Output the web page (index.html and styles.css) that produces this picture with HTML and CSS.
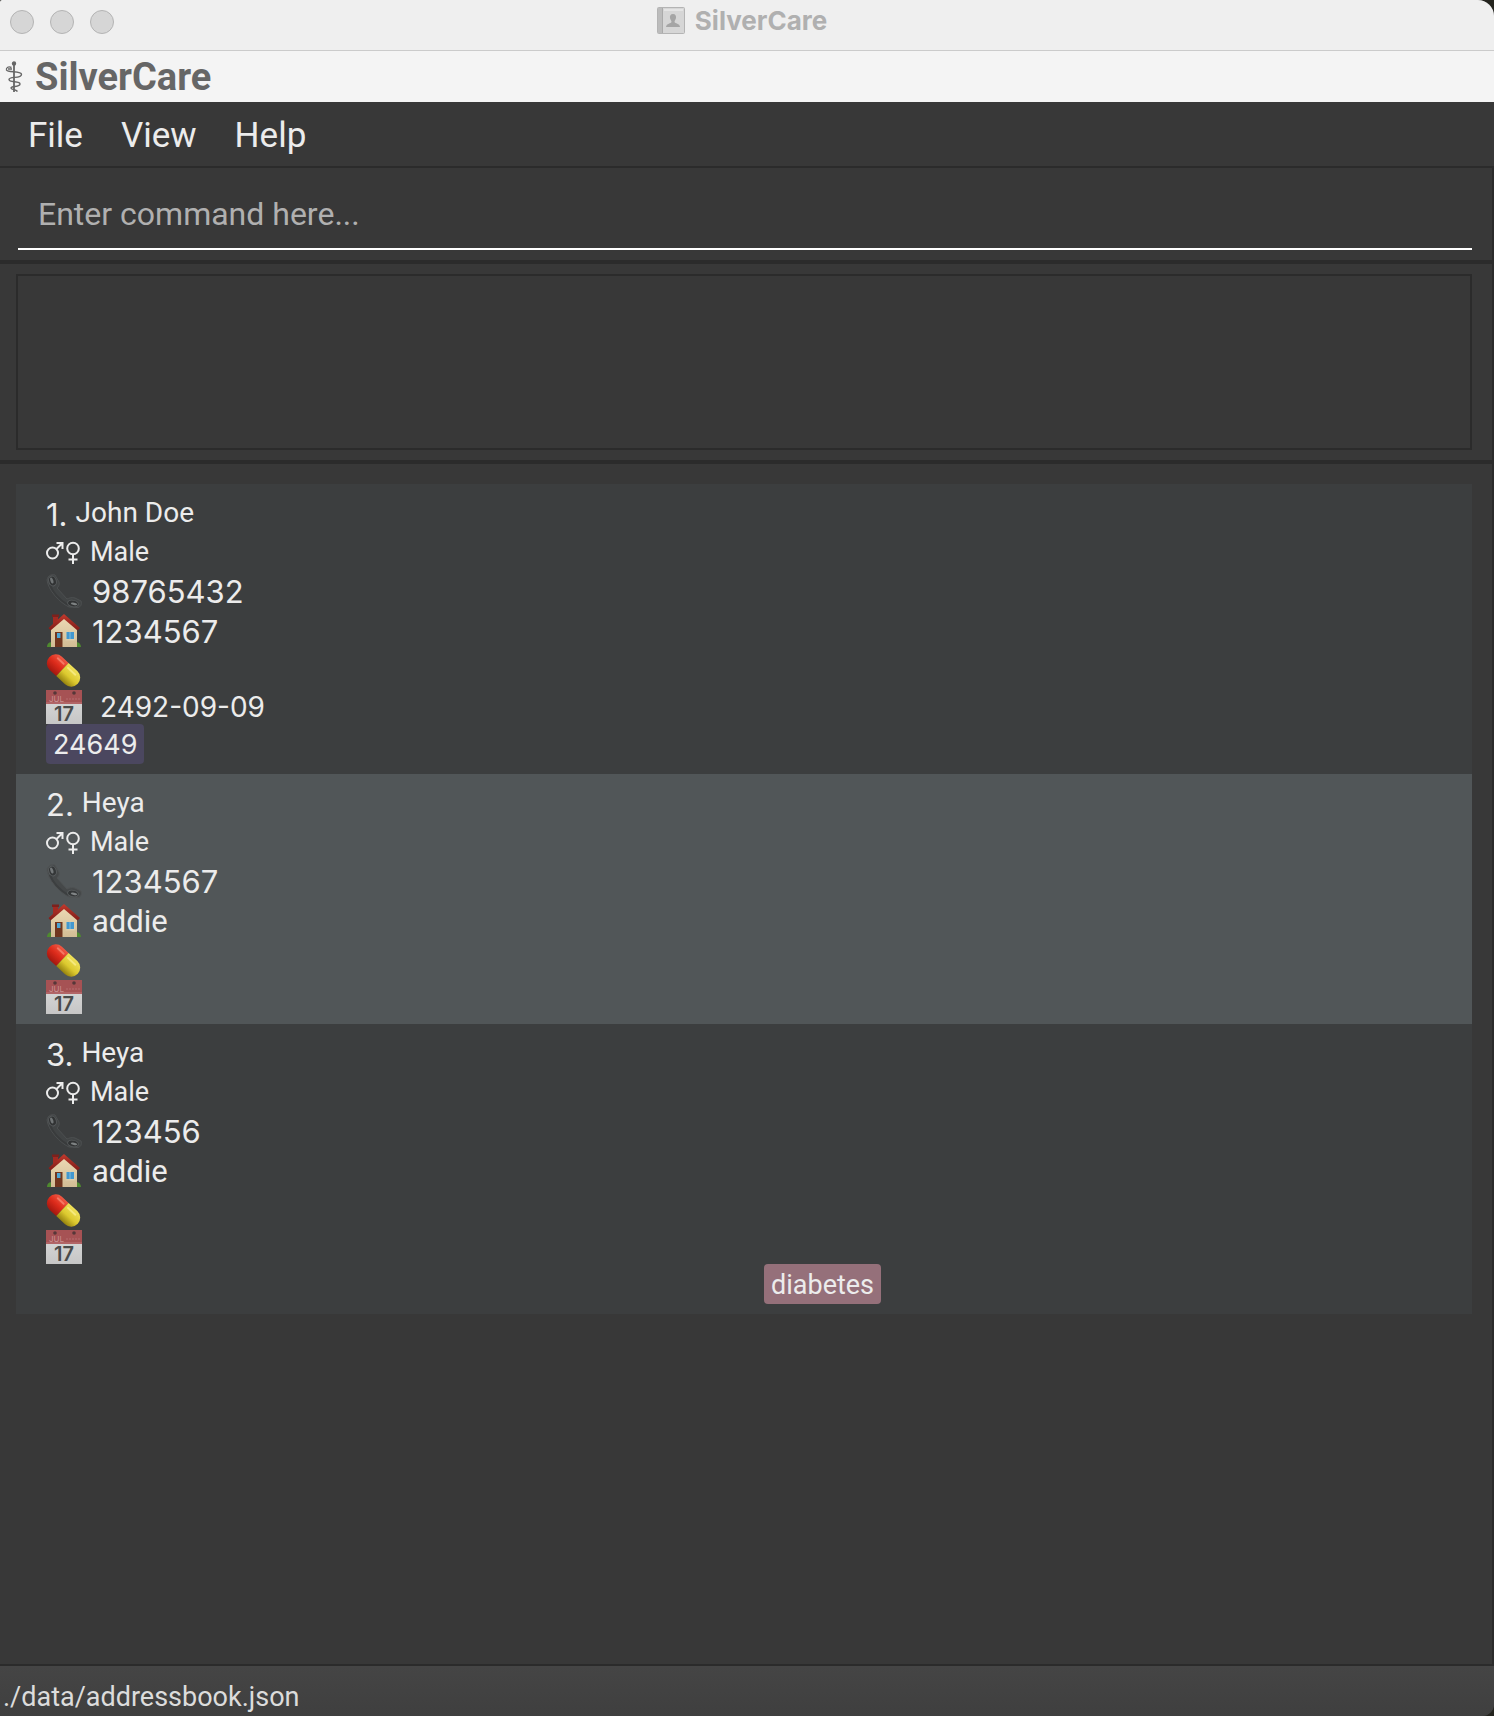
FILE: index.html
```html
<!DOCTYPE html>
<html lang="en">
<head>
<meta charset="utf-8">
<title>SilverCare</title>
<link rel="stylesheet" href="styles.css">
</head>
<body>
<svg class="sprite" aria-hidden="true">
  <defs>
    <linearGradient id="roof" x1="0" y1="0" x2="0" y2="1"><stop offset="0" stop-color="#c3392c"/><stop offset="1" stop-color="#7e1c18"/></linearGradient>
    <linearGradient id="wall" x1="0" y1="0" x2="0" y2="1"><stop offset="0" stop-color="#ecd9b4"/><stop offset="1" stop-color="#d3bd95"/></linearGradient>
    <linearGradient id="red" x1="0" y1="0" x2="0" y2="1"><stop offset="0" stop-color="#ef5a45"/><stop offset=".5" stop-color="#dd2b1b"/><stop offset="1" stop-color="#a3170f"/></linearGradient>
    <linearGradient id="yellow" x1="0" y1="0" x2="0" y2="1"><stop offset="0" stop-color="#f0e25a"/><stop offset=".55" stop-color="#dcc92e"/><stop offset="1" stop-color="#96830f"/></linearGradient>
    <linearGradient id="page" x1="0" y1="0" x2="0" y2="1"><stop offset="0" stop-color="#dcdcdc"/><stop offset="1" stop-color="#c6c6c6"/></linearGradient>
  </defs>
  <symbol id="gender" viewBox="0 0 36 26">
    <g fill="none" stroke="#ececec" stroke-width="2">
      <circle cx="6.500" cy="14" r="5.500"/><path d="M10.500 10 16 4.500M10.500 4H16.500V10"/>
      <circle cx="27" cy="9.500" r="5.800"/><path d="M27 15.500V25M22.500 20.500H31.500"/>
    </g>
  </symbol>
  <symbol id="phone" viewBox="0 0 36 34">
    <g opacity=".85">
    <path d="M1 6C2 1 6 0 9 1L13 8C14 11 12 13 11 14L21 25C23 24 26 23 29 24L35 27C36 30 35 33 32 33.500L23 33C14 29 2 16 1 6Z" fill="#434647" stroke="#505354" stroke-width="1"/>
    <path d="M4 11C7 19 14 26 22 31" fill="none" stroke="#393b3c" stroke-width="2"/>
    <ellipse cx="6.500" cy="7" rx="3.800" ry="5" fill="#303233" stroke="#5b5f60" transform="rotate(-18 6.500 7)"/>
    <ellipse cx="5.800" cy="6.500" rx="1.400" ry="3.200" fill="#7b7f80" transform="rotate(-18 5.800 6.500)"/>
    <ellipse cx="27" cy="29.500" rx="5.500" ry="3.200" fill="#303233" stroke="#5b5f60" transform="rotate(12 27 29.500)"/>
    <ellipse cx="28" cy="29.800" rx="3.200" ry="1.200" fill="#8a8e8f" transform="rotate(12 28 29.800)"/>
    </g>
  </symbol>
  <symbol id="house" viewBox="0 0 36 34">
    <path d="M1 33C1 29 4 27 8 29L29 29C32 27 35 30 35 33Z" fill="#4f8a2f"/>
    <path d="M7 1.500H12V10H7Z" fill="#a32a22"/><path d="M6 .500H13V3H6Z" fill="#7d211c"/>
    <path d="M5 14 18 3 31 14V33H5Z" fill="url(#wall)"/>
    <path d="M18 0 34 14 31.500 16.500 18 5 4.500 16.500 2.500 14Z" fill="url(#roof)"/>
    <path d="M9 18H16.500V33H9Z" fill="#71361f"/><path d="M11 19H14.500V24H11Z" fill="#4aa3d3"/>
    <path d="M19.500 17H29V26.500H19.500Z" fill="#dccdaa"/><path d="M20.500 18H28V25H20.500Z" fill="#4398cf"/>
    <path d="M24 18V25" stroke="#83bddd"/>
  </symbol>
  <symbol id="pill" viewBox="0 0 36 34">
    <g transform="rotate(43 17.500 17.500)">
      <path d="M17 8.500H8A9 9 0 0 0 8 26.500H17Z" fill="url(#red)" transform="translate(-1 0)"/>
      <path d="M16 8.500H28A9 9 0 0 1 28 26.500H16Z" fill="url(#yellow)"/>
      <path d="M5 12.500H13" stroke="#ff9a83" stroke-width="2" stroke-linecap="round" opacity=".6"/>
      <path d="M19 12.500H29" stroke="#fff5a0" stroke-width="2" stroke-linecap="round" opacity=".6"/>
    </g>
  </symbol>
  <symbol id="calendar" viewBox="0 0 36 34">
    <path d="M0 0H36V34H0Z" fill="url(#page)"/>
    <path d="M0 0H36V14H0Z" fill="#a65254"/>
    <path d="M0 13H36" stroke="#bd7778"/>
    <circle cx="9" cy="3" r="1.800" fill="#563738"/><circle cx="28" cy="3" r="1.800" fill="#563738"/>
    <path d="M20 9H34" stroke="#b66d6e" stroke-dasharray="2 1"/>
  </symbol>
</svg>

<div class="window">
  <header class="titlebar">
    <div class="controls">
      <button class="dot" aria-label="Close"></button>
      <button class="dot" aria-label="Minimise"></button>
      <button class="dot" aria-label="Zoom"></button>
    </div>
    <div class="title">
      <svg width="28" height="28" viewBox="0 0 28 28" aria-hidden="true">
        <rect x=".5" y=".5" width="27" height="26" rx="1" fill="#d6d6d6" stroke="#b4b4b4"/>
        <path d="M1 1H5V26H1Z" fill="#bcbcbc"/><path d="M5.500 1V26" stroke="#aaa"/>
        <path d="M7 2H26V4H7Z" fill="#e4e4e4"/>
        <path d="M16 7C18.500 7 19.300 9 19 11C18.800 12.600 17.500 13.500 17.500 15C18 16.500 22.500 16.200 23 20H9C9.500 16.200 14 16.500 14.500 15C14.500 13.500 13.200 12.600 13 11C12.700 9 13.500 7 16 7Z" fill="#a5a5a5"/>
      </svg>
      <span>SilverCare</span>
    </div>
  </header>

  <div class="brand">
    <svg width="18" height="32" viewBox="0 0 18 32" fill="none" stroke="#666" stroke-width="1.400" aria-hidden="true">
      <circle cx="9" cy="2.500" r="1.500" fill="#666"/>
      <path d="M9 3V31" stroke-width="1.800"/>
      <path d="M6.500 6.500C3.500 5 1 6.500 1.500 9C2.500 12 16.500 9.500 16.500 13.500C16.500 18 4 15 4 18.500C4 22 15 19.500 15 23C15 26.500 6 24.500 6 27C6 29 10.500 28 12.500 30.500"/>
      <path d="M3 8H7"/>
    </svg>
    <h1>SilverCare</h1>
  </div>

  <nav class="menubar">
    <button>File</button>
    <button>View</button>
    <button>Help</button>
  </nav>

  <main class="content">
    <form class="command">
      <input type="text" aria-label="Command" placeholder="Enter command here...">
    </form>
    <section class="result">
      <textarea aria-label="Result" readonly></textarea>
    </section>
    <ol class="people">
      <li class="person">
        <div class="row name"><span class="index">1.</span><h2>John Doe</h2></div>
        <div class="row gender"><svg class="sex"><use href="#gender"/></svg><span>Male</span></div>
        <div class="row field"><svg class="icon"><use href="#phone"/></svg><span class="number">98765432</span></div>
        <div class="row field"><svg class="icon"><use href="#house"/></svg><span class="number">1234567</span></div>
        <div class="row medicine"><svg class="icon"><use href="#pill"/></svg></div>
        <div class="row date"><svg class="icon"><use href="#calendar"/><text x="3" y="12" class="cal-month">JUL</text><text x="18" y="31" class="cal-day">17</text></svg><time>2492-09-09</time></div>
        <div class="tags"><div><span class="tag patient">24649</span></div></div>
      </li>
      <li class="person alt">
        <div class="row name"><span class="index">2.</span><h2>Heya</h2></div>
        <div class="row gender"><svg class="sex"><use href="#gender"/></svg><span>Male</span></div>
        <div class="row field"><svg class="icon"><use href="#phone"/></svg><span class="number">1234567</span></div>
        <div class="row field"><svg class="icon"><use href="#house"/></svg><span>addie</span></div>
        <div class="row medicine"><svg class="icon"><use href="#pill"/></svg></div>
        <div class="row date"><svg class="icon"><use href="#calendar"/><text x="3" y="12" class="cal-month">JUL</text><text x="18" y="31" class="cal-day">17</text></svg></div>
      </li>
      <li class="person">
        <div class="row name"><span class="index">3.</span><h2>Heya</h2></div>
        <div class="row gender"><svg class="sex"><use href="#gender"/></svg><span>Male</span></div>
        <div class="row field"><svg class="icon"><use href="#phone"/></svg><span class="number">123456</span></div>
        <div class="row field"><svg class="icon"><use href="#house"/></svg><span>addie</span></div>
        <div class="row medicine"><svg class="icon"><use href="#pill"/></svg></div>
        <div class="row date"><svg class="icon"><use href="#calendar"/><text x="3" y="12" class="cal-month">JUL</text><text x="18" y="31" class="cal-day">17</text></svg></div>
        <div class="tags"><div></div><div><span class="tag condition">diabetes</span></div></div>
      </li>
    </ol>
  </main>

  <footer class="status">./data/addressbook.json</footer>
</div>
</body>
</html>
```

FILE: styles.css
```css
* { box-sizing: border-box; }

body {
  margin: 0;
  background: #24241e;
  color: #ececec;
  font-family: Roboto, "Liberation Sans", sans-serif;
}

h1, h2 { margin: 0; }

button, input, textarea { font: inherit; color: inherit; }

.title, .index, .number, .date, .patient {
  font-family: Inter, "Liberation Sans", sans-serif;
}

.sprite { position: absolute; width: 0; height: 0; }

.window {
  display: flex;
  flex-direction: column;
  min-height: 100vh;
  overflow: hidden;
  border-radius: 2px 16px 12px 0;
  background: #383838;
}

.titlebar {
  display: grid;
  grid-template-columns: 1fr auto 1fr;
  align-items: center;
  height: 51px;
  padding: 0 20px 6px 10px;
  border-bottom: 1px solid #cbcbcb;
  background: #efefef;
}

.controls { display: flex; gap: 16px; }

.dot {
  width: 24px;
  height: 24px;
  padding: 0;
  border: 1px solid #b4b4b4;
  border-radius: 50%;
  background: #d6d6d6;
}

.title {
  display: flex;
  align-items: center;
  gap: 10px;
  padding-bottom: 2px;
  color: #b0b0b0;
  font-size: 26px;
  font-weight: 700;
  line-height: 40px;
}

.brand {
  display: flex;
  align-items: center;
  gap: 12px;
  height: 51px;
  padding: 0 5px;
  background: #f4f4f4;
  color: #666;
}

.brand h1 { font-size: 38px; font-weight: 700; line-height: 48px; }

.menubar {
  display: flex;
  gap: 38px;
  height: 66px;
  padding: 2px 28px 0;
  border-bottom: 2px solid #2b2b2b;
}

.menubar button {
  padding: 0;
  border: 0;
  background: none;
  font-size: 35px;
}

.content {
  display: flex;
  flex: 1;
  flex-direction: column;
  border-right: 2px solid #2b2b2b;
}

.command {
  padding: 10px 20px 10px 18px;
  border-bottom: 4px solid #2b2b2b;
}

.command input {
  display: block;
  width: 100%;
  height: 72px;
  padding: 2px 20px 0;
  border: 0;
  border-bottom: 2px solid #fff;
  outline: 0;
  background: none;
  font-size: 32px;
}

.command input::placeholder { color: #b0b0b0; opacity: 1; }

.result {
  padding: 10px 20px 10px 16px;
  border-bottom: 4px solid #2b2b2b;
}

.result textarea {
  display: block;
  width: 100%;
  height: 176px;
  border: 2px solid #2b2b2b;
  outline: 0;
  background: none;
  resize: none;
}

.people {
  margin: 0;
  padding: 20px 20px 20px 16px;
  list-style: none;
}

.person {
  padding: 10px 0 10px 30px;
  background: #3c3e3f;
  font-size: 28px;
}

.person.alt { background: #515658; }

.row {
  display: flex;
  align-items: center;
  gap: 10px;
  height: 40px;
}

.name { gap: 8px; height: 36px; }
.name h2 { font-size: 28px; font-weight: 400; }
.index { padding-top: 6px; font-size: 31px; line-height: 44px; }
.gender { gap: 8px; height: 42px; padding-top: 2px; font-size: 27px; }
.field { font-size: 31px; }
.field, .medicine { padding-bottom: 2px; }
.medicine { height: 38px; }
.date { gap: 18px; height: 34px; }

.icon { width: 36px; height: 34px; }
.sex { width: 36px; height: 26px; }

.cal-month { fill: #c99091; font-size: 8px; }
.cal-day { fill: #4a4a4a; font-size: 20px; font-weight: 600; text-anchor: middle; }

.tags {
  display: grid;
  grid-template-columns: 1fr 1fr;
  gap: 10px;
}

.tag {
  display: inline-block;
  height: 40px;
  padding: 0 7px;
  border-radius: 4px;
  line-height: 42px;
  vertical-align: top;
}

.tag.patient { background: #4b475f; font-size: 27px; }
.tag.condition { background: #95707a; font-size: 27px; }

.status {
  height: 52px;
  padding: 10px 3px 0;
  border-top: 2px solid #2b2b2b;
  background: linear-gradient(#454545, #3f3f3f);
  color: #dcdcdc;
  font-size: 27px;
  line-height: 42px;
}
```
